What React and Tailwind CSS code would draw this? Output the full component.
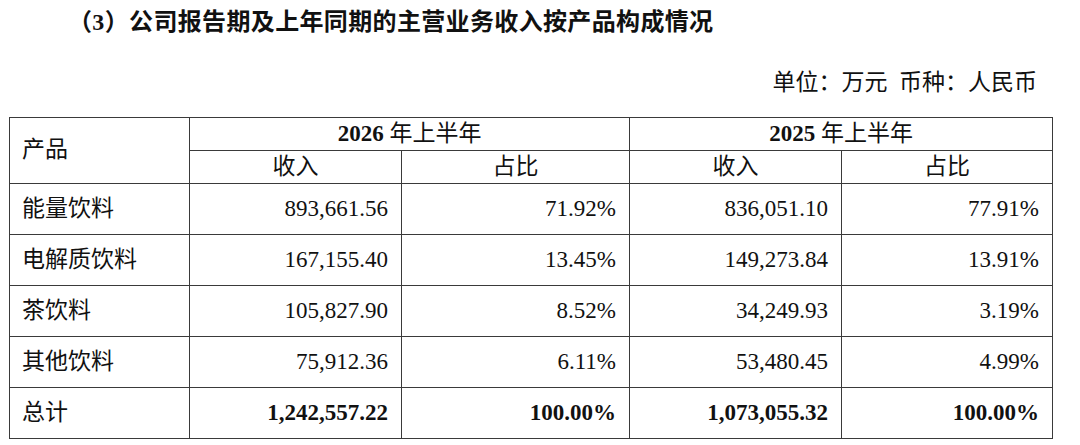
const rows = [
  ['能量饮料', '893,661.56', '71.92%', '836,051.10', '77.91%'],
  ['电解质饮料', '167,155.40', '13.45%', '149,273.84', '13.91%'],
  ['茶饮料', '105,827.90', '8.52%', '34,249.93', '3.19%'],
  ['其他饮料', '75,912.36', '6.11%', '53,480.45', '4.99%'],
];

const cell = 'border-[1.5px] border-[#3a3a3a] p-0';

export default function App() {
  return (
    <div
      className="w-[1080px] h-[445px] bg-white text-[#111] pt-[7px] overflow-hidden"
      style={{ fontFamily: "'Liberation Serif', 'Noto Sans CJK SC', serif" }}
    >
      <div className="pl-[68px] text-[24px] leading-[30px] font-semibold tracking-[0.35px]">
        （<span className="font-bold">3</span>）公司报告期及上年同期的主营业务收入按产品构成情况
      </div>

      <div className="mt-[31px] flex justify-end pr-[43px] text-[23px] leading-[30px]">
        单位：万元&nbsp;&nbsp;币种：人民币
      </div>

      <table className="ml-[9px] mt-[19px] w-[1043px] table-fixed border-collapse text-[23px]">
        <colgroup>
          <col className="w-[180px]" />
          <col className="w-[212px]" />
          <col className="w-[228px]" />
          <col className="w-[212px]" />
          <col className="w-[211px]" />
        </colgroup>
        <tbody>
          <tr className="h-[33px]">
            <td rowSpan={2} className={`${cell} pl-[12px] text-left align-middle`}>
              产品
            </td>
            <td colSpan={2} className={`${cell} text-center leading-[28px]`}>
              <span className="font-bold">2026</span> 年上半年
            </td>
            <td colSpan={2} className={`${cell} text-center leading-[28px]`}>
              <span className="font-bold">2025</span> 年上半年
            </td>
          </tr>
          <tr className="h-[33px]">
            <td className={`${cell} text-center leading-[28px]`}>收入</td>
            <td className={`${cell} text-center leading-[28px]`}>占比</td>
            <td className={`${cell} text-center leading-[28px]`}>收入</td>
            <td className={`${cell} text-center leading-[28px]`}>占比</td>
          </tr>
          {rows.map((r) => (
            <tr key={r[0]} className="h-[51px]">
              <td className={`${cell} pl-[12px] text-left`}>{r[0]}</td>
              {r.slice(1).map((v, i) => (
                <td key={i} className={`${cell} pr-[13px] text-right`}>
                  {v}
                </td>
              ))}
            </tr>
          ))}
          <tr className="h-[51px]">
            <td className={`${cell} pl-[12px] text-left`}>总计</td>
            <td className={`${cell} pr-[13px] text-right font-bold`}>1,242,557.22</td>
            <td className={`${cell} pr-[13px] text-right font-bold`}>100.00%</td>
            <td className={`${cell} pr-[13px] text-right font-bold`}>1,073,055.32</td>
            <td className={`${cell} pr-[13px] text-right font-bold`}>100.00%</td>
          </tr>
        </tbody>
      </table>
    </div>
  );
}
